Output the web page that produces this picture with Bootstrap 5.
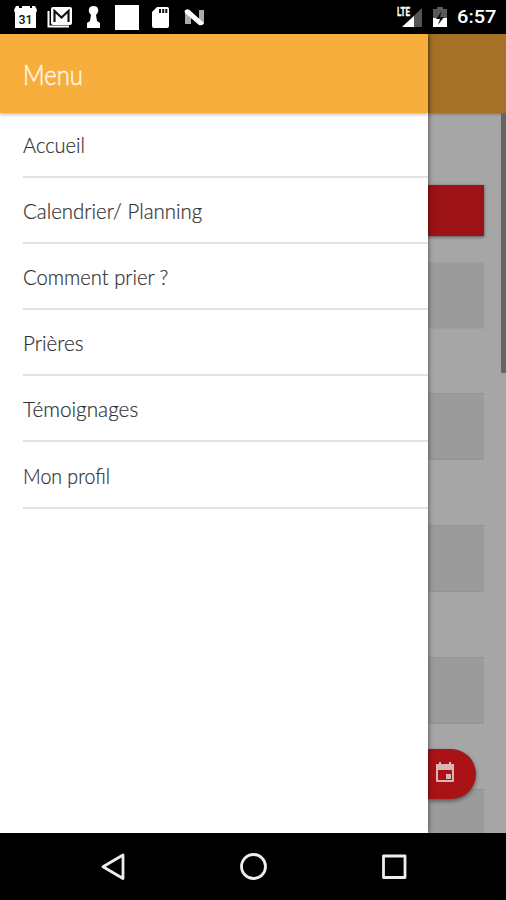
<!DOCTYPE html>
<html lang="fr">
<head>
<meta charset="utf-8">
<meta name="viewport" content="width=device-width, initial-scale=1">
<title>Menu</title>
<link href="https://cdn.jsdelivr.net/npm/bootstrap@5.3.0/dist/css/bootstrap.min.css" rel="stylesheet">
<style>
body{width:506px;height:900px;font-family:Lato,"Liberation Sans",sans-serif;background:#000}
svg{display:block;flex:none}
.status{height:34px;color:#fff}
.status-left{padding-left:14px}
.clock{font:500 19px/36px Roboto,sans-serif;width:49px;white-space:nowrap}
.stage{height:799px}
.drawer{width:428px;background:#fff;box-shadow:0 0 5px rgba(0,0,0,.6);z-index:2}
.drawer-head{height:79px;background:#f8ae3c;color:#fff8ea;padding:3px 0 0 23px;font-size:27px;box-shadow:0 1px 4px rgba(0,0,0,.35)}
.head-label{font-weight:300;-webkit-text-stroke:.45px #fff8ea}
.fit{display:inline-block;transform-origin:0 50%;white-space:nowrap}
.menu-list{padding-left:23px;margin-top:-1px}
.entry{height:66.1px;border-bottom:2px solid #e2e2e2;color:#303030;font-size:22px;font-weight:300;padding-top:1px;text-decoration:none;-webkit-text-stroke:.2px #303030}
.behind{width:78px;background:#a6a6a6}
.behind-head{height:79px;background:#a47126;box-shadow:0 1px 3px rgba(0,0,0,.3)}
.behind-body{height:720px}
.red-card{height:51px;width:56px;margin-top:72px;background:#9c1216;box-shadow:0 1px 3px rgba(0,0,0,.5)}
.block{height:67px;width:56px;background:#9b9b9b;border-top:1px solid #959595;border-bottom:1px solid #949494;margin-bottom:65px;flex:none}
.first-block{margin-top:26px;height:67px;margin-bottom:64px;border-color:#9e9e9e}
.scroller{right:0;top:0;width:5px;height:260px;background:#656565}
.fab{left:0;top:636px;width:48px;height:50px;border-radius:0 25px 25px 0;background:#a91216;box-shadow:0 2px 4px rgba(0,0,0,.45);padding-left:6px;padding-bottom:3px}
.sysnav{height:67px;padding-left:100px}
</style>
</head>
<body class="overflow-hidden">
<header class="status d-flex align-items-center justify-content-between">
  <div class="status-left d-flex">
    <svg width="190" height="34" viewBox="14 0 190 34">
      <path fill="#fff" d="M16 6h3v2h3V6h8v2h2V6h3l2 4-1 3v15H15V13l-1-3z"/>
      <text x="18.500" y="23.500" textLength="14" lengthAdjust="spacingAndGlyphs" font-family="Roboto,sans-serif" font-size="13" font-weight="500" fill="#111">31</text>
      <path fill="none" stroke="#fff" stroke-width="2" d="M48.500 11v15.500H69"/>
      <rect x="51" y="7" width="21" height="18" rx="2" fill="#fff"/>
      <path fill="none" stroke="#111" stroke-width="2.200" d="M54.500 22V11l7 6.500 7-6.500v11"/>
      <path fill="#fff" d="M90 7q3.500-2 7 0 3 4-1 8l1 6 3 2v5H87v-5l3-2 1-6q-4-4-1-8z"/>
      <path fill="#fff" d="M115 5h24v25h-24z"/>
      <path fill="#fff" d="M157 7h10q2 0 2 2v17q0 2-2 2h-13q-2 0-2-2V12z"/>
      <path stroke="#111" stroke-width="2" d="M160 9v4M163.200 9v4M166.300 9v4"/>
      <path fill="#aaa" d="M185 12l6 6v6h-6zM199 10h5v14l-5-5z"/>
      <path fill="#fff" d="M184.500 11q2-3 5-1L204 23q-1 3-5 2L185 13z"/>
    </svg>
  </div>
  <div class="d-flex align-items-center">
    <svg width="60" height="34" viewBox="397 0 60 34">
      <path fill="#555" d="M422 8v19h-20z"/>
      <path fill="#fff" d="M414 16v11h-12z"/>
      <text x="397" y="16" textLength="13" lengthAdjust="spacingAndGlyphs" font-family="Roboto,sans-serif" font-size="12" font-weight="700" fill="#fff" stroke="#fff" stroke-width=".3">LTE</text>
      <path fill="#5a5a5a" d="M433 9h4V7h6v2h4v9h-14z"/>
      <path fill="#fff" d="M433 18h14v9h-14z"/>
      <path fill="#111" d="M442 11l-6 8h4l-2 6 6-8h-4z"/>
    </svg>
    <div class="clock"><span class="fit" data-w="38">6:57</span></div>
  </div>
</header>
<main class="stage d-flex overflow-hidden">
  <nav class="drawer position-relative">
    <div class="drawer-head d-flex align-items-center position-relative"><span class="fit head-label" data-w="59">Menu</span></div>
    <div class="menu-list">
      <a class="entry d-flex align-items-center"><span class="fit" data-w="61">Accueil</span></a>
      <a class="entry d-flex align-items-center"><span class="fit" data-w="178">Calendrier/ Planning</span></a>
      <a class="entry d-flex align-items-center"><span class="fit" data-w="144">Comment prier ?</span></a>
      <a class="entry d-flex align-items-center"><span class="fit" data-w="60">Prières</span></a>
      <a class="entry d-flex align-items-center"><span class="fit" data-w="114">Témoignages</span></a>
      <a class="entry d-flex align-items-center"><span class="fit" data-w="86">Mon profil</span></a>
    </div>
  </nav>
  <section class="behind">
    <div class="behind-head"></div>
    <div class="behind-body position-relative d-flex flex-column overflow-hidden">
      <div class="red-card flex-shrink-0"></div>
      <div class="block first-block"></div>
      <div class="block"></div>
      <div class="block"></div>
      <div class="block"></div>
      <div class="block"></div>
      <div class="scroller position-absolute"></div>
      <div class="fab position-absolute d-flex align-items-center">
        <svg width="22" height="24" viewBox="0 0 22 24">
          <path fill="none" stroke="#d9b5b5" stroke-width="2" stroke-linejoin="round" d="M3 4h16v16H3z"/>
          <path fill="#d9b5b5" d="M2 3h18v6H2zM5 1h2v3H5zM15 1h2v3h-2zM12 13h5v5h-5z"/>
        </svg>
      </div>
    </div>
  </section>
</main>
<footer class="sysnav d-flex align-items-center">
  <svg width="310" height="67" viewBox="100 833 310 67" fill="none" stroke="#eee" stroke-width="2.800" stroke-linejoin="round">
    <path d="M123 855v23.500l-20-11.700z"/>
    <circle cx="253.500" cy="866.500" r="12"/>
    <rect x="383.500" y="856" width="21.500" height="21.500"/>
  </svg>
</footer>
<script src="https://cdn.jsdelivr.net/npm/bootstrap@5.3.0/dist/js/bootstrap.bundle.min.js"></script>
<script>
// Condense each label to its intended measure.
document.querySelectorAll('.fit').forEach(function (el) {
  el.style.transform = 'scaleX(' + (Number(el.dataset.w) + 1) / el.offsetWidth + ')';
});
</script>
</body>
</html>
